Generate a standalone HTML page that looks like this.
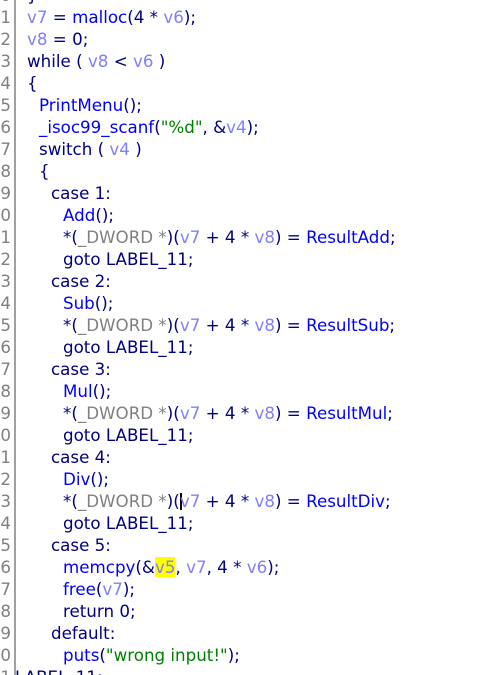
<!DOCTYPE html>
<html><head><meta charset="utf-8"><style>
html,body{margin:0;padding:0;background:#fff;width:491px;height:675px;overflow:hidden;position:relative}
.g{position:absolute;left:14px;top:0;width:2px;height:675px;background:#a0a0a0}
.l{position:absolute;left:0;height:22px;line-height:22px;font-family:"DejaVu Sans",sans-serif;font-size:16.7px;white-space:pre;color:#000080}
.nw{position:absolute;left:-29px;width:40px;text-align:right;color:#808080}
.t{position:absolute;left:27px}
.f{color:#0000ff}.v{color:#8080ff}.c{color:#808080}.s{color:#008000}
.h{background:#ffff00}
.cur{display:inline-block;width:2px;height:17px;background:#000;vertical-align:-3px;margin-right:-2px}
</style></head><body>
<div class="g"></div>
<div class="l" style="top:-16px"><span class="nw">20</span><span class="t">}</span></div>
<div class="l" style="top:6px"><span class="nw">21</span><span class="t"><span class="v">v7</span> = <span class="f">malloc</span>(4 * <span class="v">v6</span>);</span></div>
<div class="l" style="top:28px"><span class="nw">22</span><span class="t"><span class="v">v8</span> = 0;</span></div>
<div class="l" style="top:50px"><span class="nw">23</span><span class="t">while ( <span class="v">v8</span> &lt; <span class="v">v6</span> )</span></div>
<div class="l" style="top:72px"><span class="nw">24</span><span class="t">{</span></div>
<div class="l" style="top:94px"><span class="nw">25</span><span class="t" style="left:39px"><span class="f">PrintMenu</span>();</span></div>
<div class="l" style="top:116px"><span class="nw">26</span><span class="t" style="left:39px"><span class="f">_isoc99_scanf</span>(<span class="s">"%d"</span>, &amp;<span class="v">v4</span>);</span></div>
<div class="l" style="top:138px"><span class="nw">27</span><span class="t" style="left:39px">switch ( <span class="v">v4</span> )</span></div>
<div class="l" style="top:160px"><span class="nw">28</span><span class="t" style="left:39px">{</span></div>
<div class="l" style="top:182px"><span class="nw">29</span><span class="t" style="left:51px">case 1:</span></div>
<div class="l" style="top:204px"><span class="nw">30</span><span class="t" style="left:63px"><span class="f">Add</span>();</span></div>
<div class="l" style="top:226px"><span class="nw">31</span><span class="t" style="left:63px">*(<span class="c">_DWORD *</span>)(<span class="v">v7</span> + 4 * <span class="v">v8</span>) = <span class="f">ResultAdd</span>;</span></div>
<div class="l" style="top:248px"><span class="nw">32</span><span class="t" style="left:63px">goto LABEL_11;</span></div>
<div class="l" style="top:270px"><span class="nw">33</span><span class="t" style="left:51px">case 2:</span></div>
<div class="l" style="top:292px"><span class="nw">34</span><span class="t" style="left:63px"><span class="f">Sub</span>();</span></div>
<div class="l" style="top:314px"><span class="nw">35</span><span class="t" style="left:63px">*(<span class="c">_DWORD *</span>)(<span class="v">v7</span> + 4 * <span class="v">v8</span>) = <span class="f">ResultSub</span>;</span></div>
<div class="l" style="top:336px"><span class="nw">36</span><span class="t" style="left:63px">goto LABEL_11;</span></div>
<div class="l" style="top:358px"><span class="nw">37</span><span class="t" style="left:51px">case 3:</span></div>
<div class="l" style="top:380px"><span class="nw">38</span><span class="t" style="left:63px"><span class="f">Mul</span>();</span></div>
<div class="l" style="top:402px"><span class="nw">39</span><span class="t" style="left:63px">*(<span class="c">_DWORD *</span>)(<span class="v">v7</span> + 4 * <span class="v">v8</span>) = <span class="f">ResultMul</span>;</span></div>
<div class="l" style="top:424px"><span class="nw">40</span><span class="t" style="left:63px">goto LABEL_11;</span></div>
<div class="l" style="top:446px"><span class="nw">41</span><span class="t" style="left:51px">case 4:</span></div>
<div class="l" style="top:468px"><span class="nw">42</span><span class="t" style="left:63px"><span class="f">Div</span>();</span></div>
<div class="l" style="top:490px"><span class="nw">43</span><span class="t" style="left:63px">*(<span class="c">_DWORD *</span>)(<span class="cur"></span><span class="v">v7</span> + 4 * <span class="v">v8</span>) = <span class="f">ResultDiv</span>;</span></div>
<div class="l" style="top:512px"><span class="nw">44</span><span class="t" style="left:63px">goto LABEL_11;</span></div>
<div class="l" style="top:534px"><span class="nw">45</span><span class="t" style="left:51px">case 5:</span></div>
<div class="l" style="top:556px"><span class="nw">46</span><span class="t" style="left:63px"><span class="f">memcpy</span>(&amp;<span class="v h">v5</span>, <span class="v">v7</span>, 4 * <span class="v">v6</span>);</span></div>
<div class="l" style="top:578px"><span class="nw">47</span><span class="t" style="left:63px"><span class="f">free</span>(<span class="v">v7</span>);</span></div>
<div class="l" style="top:600px"><span class="nw">48</span><span class="t" style="left:63px">return 0;</span></div>
<div class="l" style="top:622px"><span class="nw">49</span><span class="t" style="left:51px">default:</span></div>
<div class="l" style="top:644px"><span class="nw">50</span><span class="t" style="left:63px"><span class="f">puts</span>(<span class="s">"wrong input!"</span>);</span></div>
<div class="l" style="top:666px"><span class="nw">51</span><span class="t" style="left:15px">LABEL_11:</span></div>
</body></html>
